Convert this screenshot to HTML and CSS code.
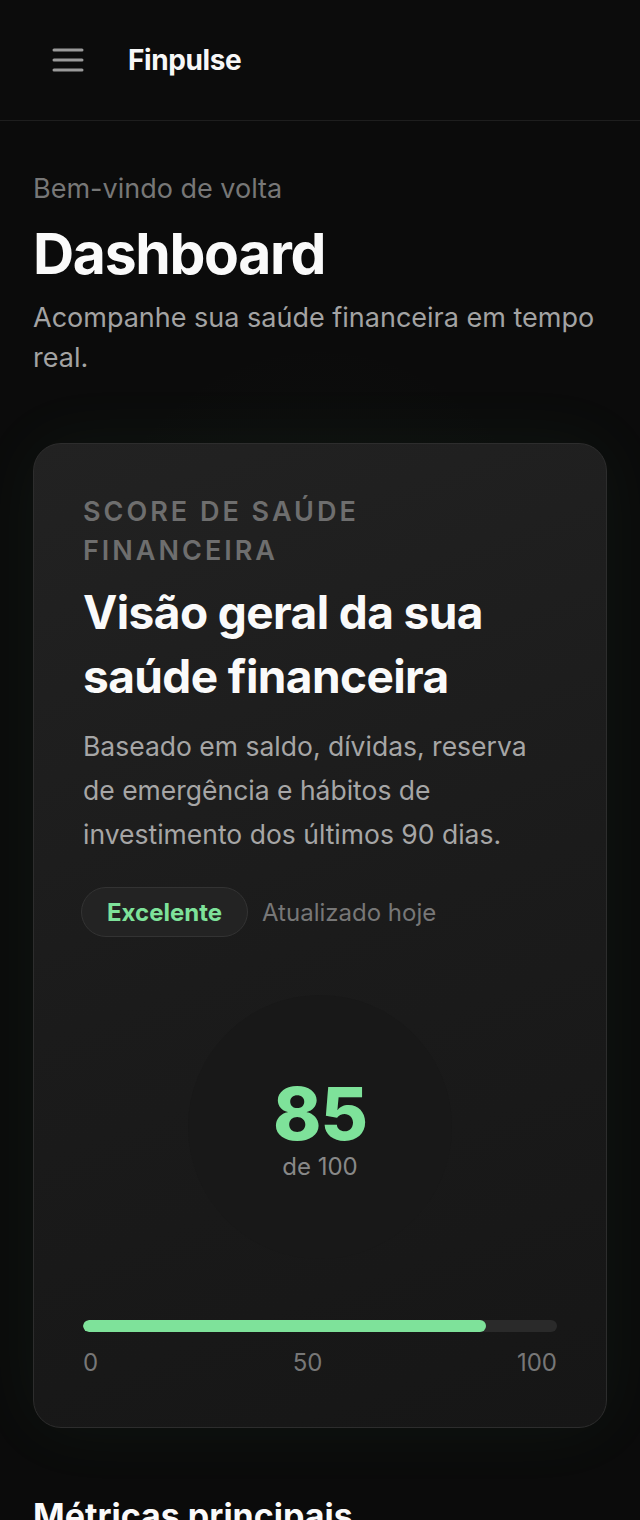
FILE: index.html
```html
<!DOCTYPE html>
<html lang="pt-BR">
<head>
<meta charset="utf-8">
<title>Finpulse</title>
<link rel="stylesheet" href="styles.css">
</head>
<body>
<header class="topbar">
  <button class="menu-btn" aria-label="Menu">
    <svg width="32" height="26" viewBox="0 0 32 26"><path d="M2 3h28M2 13h28M2 23h28" stroke="#9a9a9a" stroke-width="3" stroke-linecap="round"/></svg>
  </button>
  <span class="brand">Finpulse</span>
</header>
<main class="main">
  <section class="intro">
    <p class="welcome">Bem-vindo de volta</p>
    <h1 class="page-title">Dashboard</h1>
    <p class="subtitle">Acompanhe sua saúde financeira em tempo real.</p>
  </section>
  <section class="score-card">
    <p class="eyebrow">Score de saúde financeira</p>
    <h2 class="card-title">Visão geral da sua saúde financeira</h2>
    <p class="card-desc">Baseado em saldo, dívidas, reserva de emergência e hábitos de investimento dos últimos 90 dias.</p>
    <div class="status-row">
      <span class="pill">Excelente</span>
      <span class="updated">Atualizado hoje</span>
    </div>
    <div class="gauge-wrap">
      <div class="gauge">
        <span class="score">85</span>
        <span class="score-max">de 100</span>
      </div>
    </div>
    <div class="bar"><div class="bar-fill" style="width:85%"></div></div>
    <div class="scale"><span>0</span><span>50</span><span>100</span></div>
  </section>
  <h2 class="section-title">Métricas principais</h2>
</main>
</body>
</html>
```
FILE: styles.css
```css
* { box-sizing: border-box; }
html, body { margin: 0; padding: 0; }
body {
  background: #0b0b0b;
  color: #f5f5f5;
  font-family: Inter, "Noto Sans", "Liberation Sans", sans-serif;
  width: 640px;
  overflow: hidden;
}
.topbar {
  height: 121px;
  display: flex;
  align-items: center;
  gap: 30px;
  padding: 0 52px;
  border-bottom: 1px solid #1e1e1e;
  background: #0c0c0c;
}
.menu-btn {
  background: none;
  border: 0;
  padding: 0;
  display: flex;
  width: 46px;
}
.brand {
  font-size: 28px;
  font-weight: 700;
  color: #f7f7f7;
  letter-spacing: -0.4px;
}
.main {
  padding: 52px 33px 0;
  background: radial-gradient(ellipse 420px 600px at 50% 45%, rgba(90,140,100,0.06), rgba(0,0,0,0) 70%), #0b0b0b;
}
.intro p, .intro h1 { margin: 0; }
.welcome {
  font-size: 27px;
  line-height: 32px;
  color: #777;
}
.page-title {
  margin-top: 19px !important;
  font-size: 57px;
  line-height: 60px;
  font-weight: 700;
  letter-spacing: -1.3px;
  color: #fafafa;
}
.subtitle {
  margin-top: 14px !important;
  font-size: 27px;
  line-height: 40px;
  color: #a3a3a3;
}
.score-card {
  margin-top: 65px;
  border: 1px solid #2d2d2d;
  border-radius: 28px;
  padding: 48px 49px 50px;
  background: linear-gradient(160deg, #222 0%, #1b1b1b 50%, #161616 100%);
  box-shadow: 0 0 70px rgba(110, 200, 140, 0.06);
}
.score-card p, .score-card h2 { margin: 0; }
.eyebrow {
  font-size: 27px;
  line-height: 39px;
  font-weight: 600;
  letter-spacing: 3px;
  text-transform: uppercase;
  color: #6e6e6e;
}
.card-title {
  margin-top: 10px !important;
  font-size: 46px;
  line-height: 64px;
  font-weight: 700;
  letter-spacing: -0.6px;
  color: #fafafa;
}
.card-desc {
  margin-top: 16px !important;
  font-size: 26.5px;
  line-height: 44px;
  color: #a6a6a6;
}
.status-row {
  margin-top: 31px;
  display: flex;
  align-items: center;
  gap: 14px;
}
.pill {
  height: 50px;
  padding: 0 25px;
  margin-left: -2px;
  display: inline-flex;
  align-items: center;
  border-radius: 25px;
  border: 1px solid #333;
  background: #232323;
  color: #7ee29a;
  font-size: 24px;
  font-weight: 700;
}
.updated {
  font-size: 24px;
  color: #777;
}
.gauge-wrap {
  margin-top: 58px;
  display: flex;
  justify-content: center;
}
.gauge {
  width: 264px;
  height: 264px;
  border-radius: 50%;
  background: #181818;
  display: flex;
  flex-direction: column;
  align-items: center;
  justify-content: center;
  padding-top: 4px;
}
.score {
  font-size: 73px;
  line-height: 76px;
  font-weight: 800;
  color: #7ee29a;
  letter-spacing: -1px;
}
.score-max {
  margin-top: 0;
  font-size: 24px;
  line-height: 30px;
  color: #888;
}
.bar {
  margin-top: 61px;
  height: 12px;
  border-radius: 6px;
  background: #2a2a2a;
  overflow: hidden;
}
.bar-fill {
  height: 100%;
  border-radius: 6px;
  background: #7ee29a;
}
.scale {
  margin-top: 17px;
  display: flex;
  justify-content: space-between;
  font-size: 24px;
  line-height: 28px;
  color: #777;
}
.section-title {
  margin: 68px 0 0;
  font-size: 34px;
  line-height: 40px;
  font-weight: 700;
  color: #fafafa;
}
```
